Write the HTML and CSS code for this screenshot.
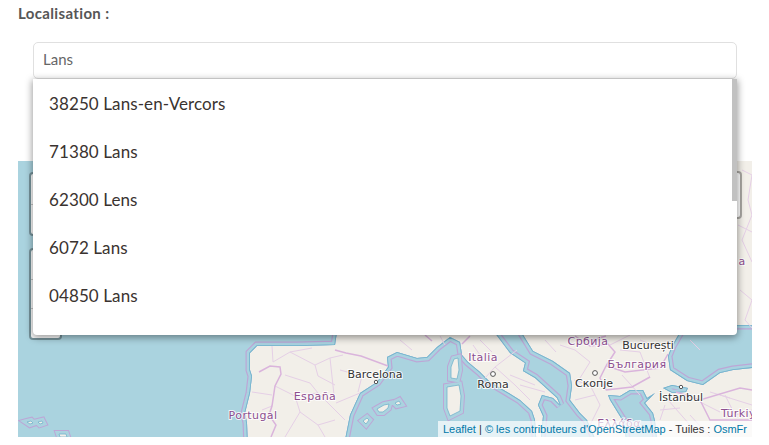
FILE: index.html
```html
<!DOCTYPE html>
<html lang="fr">
<head>
<meta charset="utf-8">
<title>Localisation</title>
<link rel="stylesheet" href="styles.css">
</head>
<body>
<main class="page">
  <label class="label" for="loc">Localisation :</label>
  <div class="search">
    <input class="input" id="loc" type="text" value="Lans">
  </div>
  <section class="map">
    <svg class="tiles" viewBox="18 161 734 276" width="734" height="276" aria-hidden="true">
      <defs>
        <path id="seas" d="M8 150H225V325H338L335 345 297 346 273 346 257 346 250 353 250 370 252 376 250 393 245 413 247 423 248 450H8ZM343 450 350 415 360 393 377 382 388 367 387 357 397 352 417 358 427 357 437 347 450 337 460 342 462 355 468 362 480 372 490 382 507 392 520 400 532 411 535 420 537 450ZM489 325 510 353 525 363 523 371 535 378 557 398 560 405 553 398 542 395 538 405 543 416 540 450H600L587 420 580 413 570 400 572 386 570 373 553 361 533 351 517 325ZM608 395 620 396 630 390 643 390 647 398 655 393 645 403 653 413 655 421 658 450H628L623 421 618 413 610 400ZM684 325 672 346 668 356 670 370 687 381 703 385 720 373 733 370 760 367V325ZM663 388 672 385 688 388 686 392 672 393Z"/>
        <path id="isles" d="M451 367 454 359 458 358 459 370 457 379 451 378ZM447 387 459 385 461 396 460 411 450 416 447 408ZM377 409 384 405 389 404 388 408 383 412 379 412ZM395 403 399 401 401 404 397 405ZM363 421 367 418 369 420 366 424ZM27 422 31 421 33 423 30 424ZM38 422 42 421 43 423 40 424ZM59 434 66 434 67 437 60 437Z"/>
        <clipPath id="seaclip"><use href="#seas"/></clipPath>
      </defs>
      <rect class="land" x="18" y="161" width="734" height="276"/>
      <use class="sea" href="#seas"/>
      <g clip-path="url(#seaclip)">
        <use class="ring-a" href="#seas"/>
        <use class="ring-b" href="#seas"/>
        <use class="ring-c" href="#seas"/>
      </g>
      <use class="isle-a" href="#isles"/>
      <use class="isle-b" href="#isles"/>
      <use class="isle-c" href="#isles"/>
      <g class="admin">
        <path d="M272 346 273 362 290 352 312 348M290 352 315 365 330 358 343 355M315 365 318 376 335 385M275 386 295 396 318 393 335 410 345 420M295 396 300 412 318 425 335 420M285 375 310 383 318 393M330 358 334 395M360 393 336 403M252 392 272 395M262 410 272 406M300 412 285 437M318 425 325 437M340 370 362 376 358 392"/>
        <path d="M517 350 495 367 515 385 530 400M495 367 485 378M480 340 492 352M510 375 535 385M574 380 590 385 600 405 590 425M575 350 590 362 580 378M620 350 640 352 650 378M622 375 640 395M700 402 720 412M725 395 735 415M690 415 710 437M560 345 575 350M668 400 690 425M610 345 630 335M710 392 730 398M660 410 680 408M400 340 412 350M440 336 445 345M473 345 480 355M520 385 545 392M545 340 556 352M575 400 595 395M640 340 665 350M665 405 660 420M720 395 752 405M735 415 752 410M690 340 700 350"/>
        <path d="M742 170 752 175 748 200 752 215 742 240 752 262M738 225 752 232M740 290 752 300 745 320 752 328"/>
      </g>
      <g class="border">
        <path d="M259 372 270 366 280 367 281 374 275 386 272 406 269 415 276 425 271 437"/>
        <path d="M335 350 346 353 361 356 388 366"/>
        <path d="M470 336 462 344M425 335 432 341M575 336 590 346 608 344 615 352 606 366M607 366 625 372 660 368 668 354"/>
        <path d="M592 340 606 336M606 366 600 378 606 390M606 390 632 387 650 377"/>
        <path d="M676 392 700 400 740 388 752 390M700 400 710 420 752 420"/>
      </g>
      <g class="place">
        <text x="375" y="378" text-anchor="middle">Barcelona</text>
        <text x="493" y="388" text-anchor="middle">Roma</text>
        <text x="594" y="387" text-anchor="middle">Скопје</text>
        <text x="648" y="349" text-anchor="middle">București</text>
        <text x="681" y="401" text-anchor="middle">İstanbul</text>
      </g>
      <g class="country">
        <text x="253" y="419" text-anchor="middle">Portugal</text>
        <text x="315" y="400" text-anchor="middle">España</text>
        <text x="483" y="361" text-anchor="middle">Italia</text>
        <text x="588" y="345" text-anchor="middle">Србија</text>
        <text x="637" y="368" text-anchor="middle">България</text>
        <text x="742" y="417" text-anchor="middle">Türkiye</text>
        <text x="742" y="265" text-anchor="middle">a</text>
        <text x="619" y="427" text-anchor="middle">Ελλάδα</text>
      </g>
      <g class="dots">
        <circle cx="376" cy="382" r="1.7"/>
        <circle cx="493" cy="374" r="2.4"/>
        <circle cx="595" cy="373" r="2.4"/>
        <circle cx="681" cy="387" r="1.7"/>
      </g>
    </svg>
    <div class="ctrl ctrl-top"><span></span><span></span></div>
    <div class="ctrl ctrl-zoom"><span></span><span></span><span></span></div>
    <div class="ctrl ctrl-right"></div>
    <div class="attrib"><a>Leaflet</a> | <a>© les contributeurs d'OpenStreetMap</a> - Tuiles : <a>OsmFr</a></div>
  </section>
  <ul class="dropdown">
    <li>38250 Lans-en-Vercors</li>
    <li>71380 Lans</li>
    <li>62300 Lens</li>
    <li>6072 Lans</li>
    <li>04850 Lans</li>
  </ul>
</main>
</body>
</html>
```

FILE: styles.css
```css
* { box-sizing: border-box; }
html, body { margin: 0; background: #fff; }
body { font-family: "Lato", "Noto Sans", sans-serif; overflow: hidden; }
.page { position: relative; width: 769px; height: 445px; padding: 5px 17px 0 18px; }
.label { display: block; height: 37px; font-size: 15px; line-height: 17px; font-weight: 700; color: #565656; letter-spacing: .35px; }
.search { padding: 0 15px; height: 119px; }
.input { display: block; width: 100%; height: 37px; padding: 0 9px 4px; border: 1px solid #e0e0e0; border-radius: 5px; font: 15px "Lato", sans-serif; color: #666; background: #fff; outline: 0; }
.map { position: relative; width: 734px; height: 276px; overflow: hidden; background: #aad3df; }
.tiles { display: block; }
.land { fill: #f2efe9; }
.sea { fill: #aad3df; }
.ring-a { fill: none; stroke: #bda6d6; stroke-width: 9; }
.ring-b { fill: none; stroke: #a9d2e0; stroke-width: 6.6; }
.ring-c { fill: none; stroke: #6fb3cc; stroke-width: 1.6; }
.isle-a { fill: none; stroke: #bda6d6; stroke-width: 8; }
.isle-b { fill: #aad3df; stroke: #aad3df; stroke-width: 6; }
.isle-c { fill: #f2efe9; stroke: #74b4cc; stroke-width: .8; }
.border { fill: none; stroke: #dab4dc; stroke-width: 1.5; }
.admin { fill: none; stroke: #e5cfe6; stroke-width: 1; }
.place text { font: 11px "DejaVu Sans", sans-serif; fill: #333; paint-order: stroke; stroke: rgba(255,255,255,.85); stroke-width: 2px; }
.country text { font: 11px "DejaVu Sans", sans-serif; letter-spacing: .4px; fill: #8d4f8f; paint-order: stroke; stroke: rgba(255,255,255,.8); stroke-width: 2px; }
.dots circle { fill: #fff; stroke: #555; stroke-width: 1; }
.ctrl { position: absolute; left: 11px; width: 33px; display: flex; flex-direction: column; overflow: hidden; background: #fff; border: 2px solid rgba(0,0,0,.3); background-clip: padding-box; border-radius: 4px; }
.ctrl span { flex: 1; border-bottom: 1px solid #ccc; }
.ctrl span:last-child { border-bottom: 0; }
.ctrl-top { top: 11px; height: 64px; }
.ctrl-zoom { top: 87px; height: 92px; }
.ctrl-right { left: 699px; top: 10px; width: 25px; height: 48px; }
.attrib { position: absolute; right: 0; bottom: 0; height: 16px; padding: 0 5px; font: 11px/16px "Liberation Sans", Arial, sans-serif; color: #333; background: rgba(255,255,255,.7); white-space: nowrap; }
.attrib a { color: #0078a8; }
.dropdown { position: absolute; left: 33px; top: 79px; width: 704px; height: 256px; margin: 0; padding: 1px 0 0; list-style: none; background: #fff; border-radius: 0 0 4px 4px; box-shadow: 0 2px 7px 1px rgba(0,0,0,.38); }
.dropdown::after { content: ""; position: absolute; right: 0; top: 0; width: 5px; height: 122px; background: #c1c1c1; }
.dropdown li { height: 48px; padding-left: 16px; font-size: 17px; line-height: 48px; color: #3a3330; letter-spacing: .1px; }
```
